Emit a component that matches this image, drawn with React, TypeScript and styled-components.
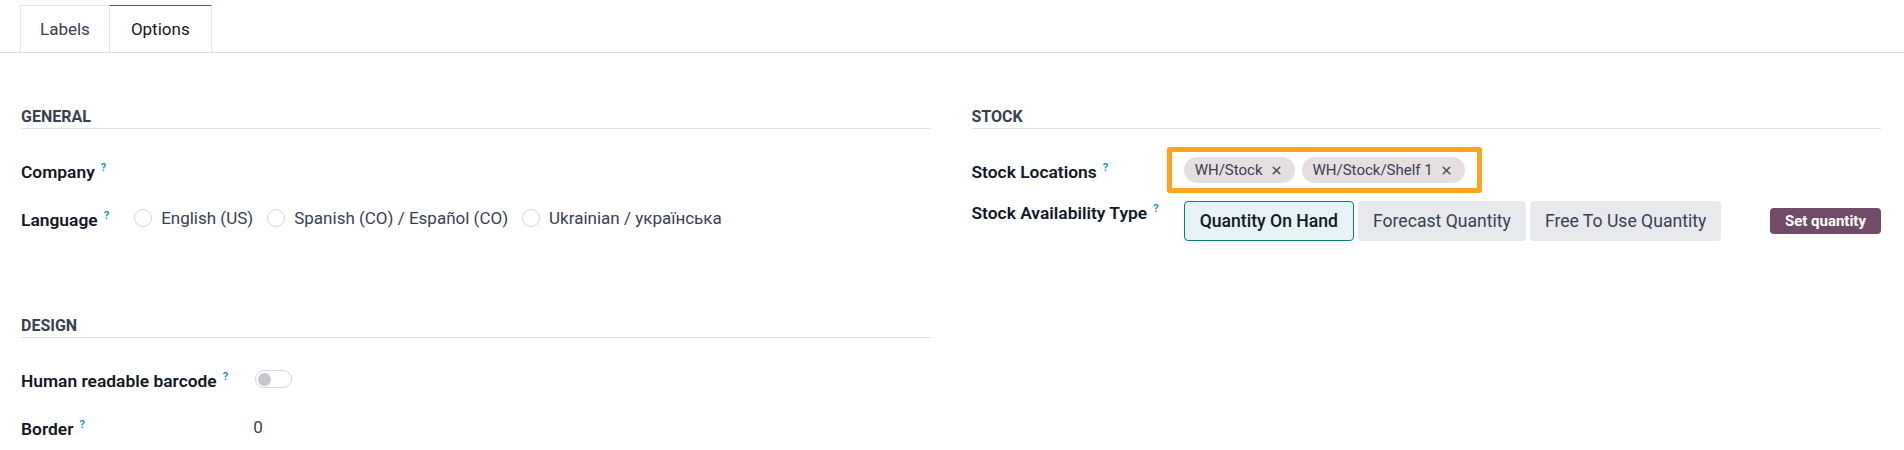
import React from "react";
import styled, { createGlobalStyle, css } from "styled-components";
import { X } from "lucide-react";

const GlobalStyle = createGlobalStyle`
    body {
        margin: 0;
        background: #ffffff;
        font-family: Roboto, "Liberation Sans", sans-serif;
        font-size: 17px;
        color: #374151;
    }
`;

const TabBar = styled.div`
    display: flex;
    padding: 5px 0 0 20px;
    border-bottom: 1px solid #dee2e6;
`;

const Tab = styled.div<{ $active?: boolean }>`
    height: 46px;
    display: flex;
    align-items: center;
    padding: 0 19px;
    border: 1px solid #e3e5e8;
    border-bottom: none;
    color: #374151;
    ${props => props.$active && css`
        border-top-color: #714b67;
        color: #111827;
        margin-left: -1px;
        padding: 0 21px;
    `}
`;

const Content = styled.div`
    display: grid;
    grid-template-columns: 1fr 1fr;
    column-gap: 41px;
    padding: 54px 23px 0 21px;
`;

const Column = styled.div`
    display: flex;
    flex-direction: column;
`;

const Group = styled.div<{ $spaced?: boolean }>`
    ${props => props.$spaced && css`
        margin-top: 78px;
    `}
`;

const GroupTitle = styled.div`
    font-size: 16px;
    font-weight: 700;
    line-height: 20px;
    text-transform: uppercase;
    color: #374151;
    padding-bottom: 1px;
    border-bottom: 1px solid #dee2e6;
`;

const FieldGrid = styled.div<{ $rowGap?: number }>`
    display: grid;
    grid-template-columns: max-content 1fr;
    grid-auto-rows: 40px;
    column-gap: 25px;
    row-gap: ${props => props.$rowGap ?? 8}px;
    margin-top: 21px;
    align-items: center;
`;

const Label = styled.div<{ $top?: boolean }>`
    font-size: 17.4px;
    font-weight: 600;
    color: #111827;
    line-height: 22px;
    white-space: nowrap;
    ${props => props.$top && css`
        align-self: start;
        margin-top: -3px;
    `}
`;

const Help = styled.sup`
    font-size: 11px;
    font-weight: 700;
    color: #1797c0;
    margin-left: 6px;
    vertical-align: 7px;
`;

const Value = styled.div`
    display: flex;
    align-items: center;
    min-width: 0;
`;

const RadioList = styled.div`
    display: flex;
    align-items: center;
    gap: 14px;
`;

const RadioOption = styled.label`
    display: flex;
    align-items: center;
    gap: 9px;
    color: #374151;
`;

const RadioCircle = styled.span`
    width: 16px;
    height: 16px;
    border-radius: 50%;
    border: 1px solid #d1d5db;
    background: #ffffff;
`;

const Toggle = styled.span`
    width: 33px;
    height: 16px;
    border-radius: 9px;
    border: 1px solid #d6d8dc;
    display: flex;
    align-items: center;
    padding-left: 2px;
    margin-left: 2px;
    &::before {
        content: "";
        width: 13px;
        height: 13px;
        border-radius: 50%;
        background: #c4c6ca;
    }
`;

const Highlight = styled.div`
    display: flex;
    align-items: center;
    gap: 7px;
    margin: -3px 0 -3px -17px;
    padding: 5px 12px;
    border: 5px solid #ffa31a;
    border-radius: 3px;
`;

const Tag = styled.span`
    display: inline-flex;
    align-items: center;
    gap: 7px;
    height: 26px;
    padding: 0 12px 0 11px;
    border-radius: 13px;
    background: #e6dfdf;
    color: #374151;
    font-size: 15px;
`;

const ChoiceRow = styled.div`
    display: flex;
    align-items: center;
    gap: 4px;
    width: 100%;
`;

const Choice = styled.button<{ $active?: boolean }>`
    height: 40px;
    padding: 0 14px;
    border-radius: 4px;
    border: 1px solid transparent;
    background: #e7e9ed;
    color: #374151;
    font-family: inherit;
    font-size: 17.6px;
    ${props => props.$active && css`
        background: #e6f2f3;
        border-color: #017e84;
        color: #111827;
        font-weight: 500;
        padding: 0 15px;
    `}
`;

const Badge = styled.span`
    margin-left: auto;
    height: 26px;
    display: inline-flex;
    align-items: center;
    padding: 0 15px;
    border-radius: 4px;
    background: #714b67;
    color: #ffffff;
    font-size: 15px;
    font-weight: 700;
`;

const languages = ["English (US)", "Spanish (CO) / Español (CO)", "Ukrainian / українська"];
const locations = ["WH/Stock", "WH/Stock/Shelf 1"];
const availability = ["Quantity On Hand", "Forecast Quantity", "Free To Use Quantity"];

export default function App() {
    return (
        <>
            <GlobalStyle />
            <TabBar>
                <Tab>Labels</Tab>
                <Tab $active>Options</Tab>
            </TabBar>
            <Content>
                <Column>
                    <Group>
                        <GroupTitle>General</GroupTitle>
                        <FieldGrid>
                            <Label>Company<Help>?</Help></Label>
                            <Value />
                            <Label>Language<Help>?</Help></Label>
                            <Value>
                                <RadioList>
                                    {languages.map(lang => (
                                        <RadioOption key={lang}>
                                            <RadioCircle />
                                            {lang}
                                        </RadioOption>
                                    ))}
                                </RadioList>
                            </Value>
                        </FieldGrid>
                    </Group>
                    <Group $spaced>
                        <GroupTitle>Design</GroupTitle>
                        <FieldGrid>
                            <Label>Human readable barcode<Help>?</Help></Label>
                            <Value><Toggle /></Value>
                            <Label>Border<Help>?</Help></Label>
                            <Value>0</Value>
                        </FieldGrid>
                    </Group>
                </Column>
                <Column>
                    <Group>
                        <GroupTitle>Stock</GroupTitle>
                        <FieldGrid $rowGap={11}>
                            <Label>Stock Locations<Help>?</Help></Label>
                            <Value>
                                <Highlight>
                                    {locations.map(loc => (
                                        <Tag key={loc}>
                                            {loc}
                                            <X size={13} strokeWidth={3} color="#4b5563" />
                                        </Tag>
                                    ))}
                                </Highlight>
                            </Value>
                            <Label $top>Stock Availability Type<Help>?</Help></Label>
                            <Value>
                                <ChoiceRow>
                                    {availability.map((opt, i) => (
                                        <Choice key={opt} $active={i === 0}>{opt}</Choice>
                                    ))}
                                    <Badge>Set quantity</Badge>
                                </ChoiceRow>
                            </Value>
                        </FieldGrid>
                    </Group>
                </Column>
            </Content>
        </>
    );
}
